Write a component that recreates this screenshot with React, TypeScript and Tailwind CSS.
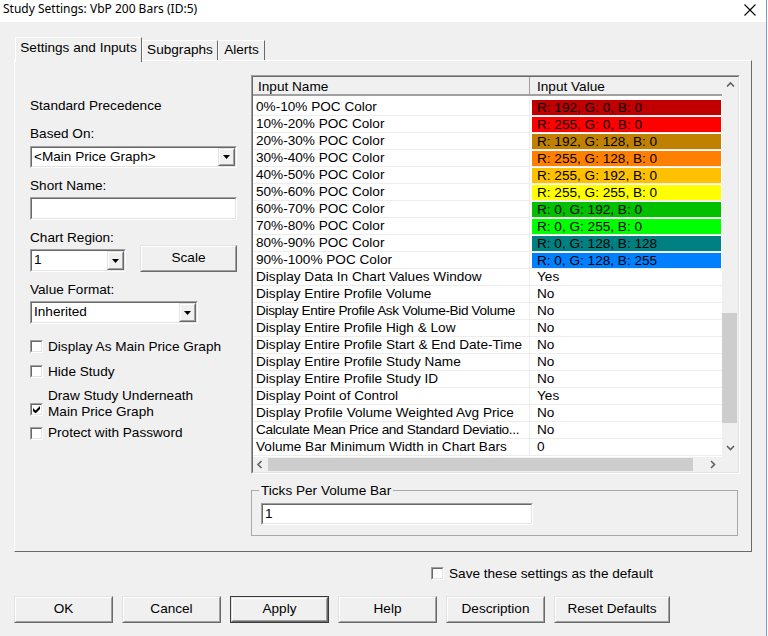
import type { ReactNode } from "react";

const FONT = { fontFamily: '"Liberation Sans", Arial, sans-serif' };

type Row = { name: string; value: string; color?: string; tight?: boolean };

const rows: Row[] = [
  { name: "0%-10% POC Color", value: "R: 192, G: 0, B: 0", color: "bg-[#c00000]" },
  { name: "10%-20% POC Color", value: "R: 255, G: 0, B: 0", color: "bg-[#ff0000]" },
  { name: "20%-30% POC Color", value: "R: 192, G: 128, B: 0", color: "bg-[#c08000]" },
  { name: "30%-40% POC Color", value: "R: 255, G: 128, B: 0", color: "bg-[#ff8000]" },
  { name: "40%-50% POC Color", value: "R: 255, G: 192, B: 0", color: "bg-[#ffc000]" },
  { name: "50%-60% POC Color", value: "R: 255, G: 255, B: 0", color: "bg-[#ffff00]" },
  { name: "60%-70% POC Color", value: "R: 0, G: 192, B: 0", color: "bg-[#00c000]" },
  { name: "70%-80% POC Color", value: "R: 0, G: 255, B: 0", color: "bg-[#00ff00]" },
  { name: "80%-90% POC Color", value: "R: 0, G: 128, B: 128", color: "bg-[#008080]" },
  { name: "90%-100% POC Color", value: "R: 0, G: 128, B: 255", color: "bg-[#0080ff]" },
  { name: "Display Data In Chart Values Window", value: "Yes" },
  { name: "Display Entire Profile Volume", value: "No" },
  { name: "Display Entire Profile Ask Volume-Bid Volume", value: "No", tight: true },
  { name: "Display Entire Profile High & Low", value: "No" },
  { name: "Display Entire Profile Start & End Date-Time", value: "No" },
  { name: "Display Entire Profile Study Name", value: "No" },
  { name: "Display Entire Profile Study ID", value: "No" },
  { name: "Display Point of Control", value: "Yes" },
  { name: "Display Profile Volume Weighted Avg Price", value: "No" },
  { name: "Calculate Mean Price and Standard Deviatio...", value: "No", tight: true },
  { name: "Volume Bar Minimum Width in Chart Bars", value: "0" },
];

// classic sunken 2px frame
function Sunken({ className = "", children }: { className?: string; children?: ReactNode }) {
  return (
    <div className={`border border-t-[#a0a0a0] border-l-[#a0a0a0] border-b-white border-r-white ${className}`}>
      <div className="flex h-full w-full border border-t-[#696969] border-l-[#696969] border-b-[#e3e3e3] border-r-[#e3e3e3] bg-white">
        {children}
      </div>
    </div>
  );
}

function Raised({ className = "", children }: { className?: string; children?: ReactNode }) {
  return (
    <div className={`border border-t-[#e3e3e3] border-l-[#e3e3e3] border-b-[#696969] border-r-[#696969] ${className}`}>
      <div className="flex h-full w-full items-center justify-center border border-t-white border-l-white border-b-[#a0a0a0] border-r-[#a0a0a0] bg-[#f0f0f0]">
        {children}
      </div>
    </div>
  );
}

function DropArrow() {
  return (
    <svg width="7" height="4" viewBox="0 0 7 4">
      <path d="M0 0h7L3.5 4z" fill="#000" />
    </svg>
  );
}

function Select({ value, className }: { value: string; className: string }) {
  return (
    <Sunken className={className}>
      <span className="flex-1 pl-[2px] leading-[17px] whitespace-nowrap">{value}</span>
      <Raised className="w-[17px]">
        <DropArrow />
      </Raised>
    </Sunken>
  );
}

function Checkbox({ checked = false }: { checked?: boolean }) {
  return (
    <div className="h-[13px] w-[13px] shrink-0 border border-t-[#a0a0a0] border-l-[#a0a0a0] border-b-white border-r-white">
      <div className="flex h-full w-full items-center justify-center border border-t-[#696969] border-l-[#696969] border-b-[#e3e3e3] border-r-[#e3e3e3] bg-white">
        {checked && (
          <svg width="7" height="7" viewBox="0 0 7 7">
            <path d="M0 2v3l2 2h1l4-4V0L2.5 4.5z" fill="#000" />
          </svg>
        )}
      </div>
    </div>
  );
}

function Chevron({ dir }: { dir: "up" | "down" | "left" | "right" }) {
  const d = {
    up: "M1 5.5 4.5 2 8 5.5",
    down: "M1 2 4.5 5.5 8 2",
    left: "M5.5 1 2 4.5 5.5 8",
    right: "M2 1 5.5 4.5 2 8",
  }[dir];
  return (
    <svg width="9" height="9" viewBox="0 0 9 9">
      <path d={d} fill="none" stroke="#606060" strokeWidth="1.6" />
    </svg>
  );
}

function Button({ label, w = "w-[99px]", primary = false }: { label: string; w?: string; primary?: boolean }) {
  if (primary) {
    return (
      <div className={`h-[27px] ${w} border border-[#3c3c3c]`}>
        <Raised className="h-full w-full">{label}</Raised>
      </div>
    );
  }
  return <Raised className={`h-[27px] ${w}`}>{label}</Raised>;
}

export default function App() {
  return (
    <div className="flex h-[636px] w-[768px] overflow-hidden bg-[#f0f0f0] text-[13.6px] text-black" style={FONT}>
      <div className="flex w-[766px] flex-col">
        {/* title bar */}
        <div className="flex h-[22px] items-start justify-between bg-white pl-[3px] pr-[10px]">
          <span className="pt-[1px] text-[12px] leading-[16px]" style={{ fontFamily: '"Noto Sans", sans-serif' }}>
            Study Settings: VbP 200 Bars (ID:5)
          </span>
          <svg className="mt-[4px]" width="12" height="12" viewBox="0 0 12 12">
            <path d="M0.5 0.5 11.5 11.5M11.5 0.5 0.5 11.5" stroke="#000" strokeWidth="1.1" />
          </svg>
        </div>

        {/* tabs */}
        <div className="flex h-[38px] items-end pl-[15px]">
          <div className="relative z-10 -mb-[2px] h-[25px] w-[127px] border-t border-l border-r border-t-white border-l-white border-r-[#696969] bg-[#f0f0f0] pt-[2px] text-center leading-[15px] whitespace-nowrap">
            Settings and Inputs
          </div>
          <div className="h-[20px] w-[76px] border-t border-l border-r border-t-white border-l-white border-r-[#696969] pt-[1px] text-center leading-[15px]">
            Subgraphs
          </div>
          <div className="h-[20px] w-[47px] border-t border-l border-r border-t-white border-l-white border-r-[#696969] pt-[1px] text-center leading-[15px]">
            Alerts
          </div>
        </div>

        {/* tab panel */}
        <div className="ml-[14px] flex h-[492px] w-[738px] border border-t-white border-l-white border-b-[#696969] border-r-[#696969]">
          {/* left column */}
          <div className="ml-[15px] w-[207px] pt-[37px]">
            <div className="h-[15px] leading-[15px]">Standard Precedence</div>
            <div className="mt-[13px] h-[15px] leading-[15px]">Based On:</div>
            <Select className="mt-[5px] h-[22px] w-[207px]" value="<Main Price Graph>" />
            <div className="mt-[10px] h-[15px] leading-[15px]">Short Name:</div>
            <Sunken className="mt-[4px] h-[23px] w-[207px]" />
            <div className="mt-[11px] h-[14px] leading-[14px]">Chart Region:</div>
            <div className="flex items-start">
              <Select className="mt-[4px] h-[23px] w-[96px]" value="1" />
              <Raised className="ml-[14px] h-[27px] w-[97px]">Scale</Raised>
            </div>
            <div className="mt-[11px] h-[14px] leading-[14px]">Value Format:</div>
            <Select className="mt-[4px] h-[23px] w-[168px]" value="Inherited" />

            <div className="mt-[15px] flex items-start gap-[5px]">
              <div className="mt-[1px]">
                <Checkbox />
              </div>
              <span className="leading-[15px]">Display As Main Price Graph</span>
            </div>
            <div className="mt-[10px] flex items-start gap-[5px]">
              <div className="mt-[1px]">
                <Checkbox />
              </div>
              <span className="leading-[15px]">Hide Study</span>
            </div>
            <div className="mt-[9px] flex items-start gap-[5px]">
              <div className="mt-[15px]">
                <Checkbox checked />
              </div>
              <span className="leading-[16px]">
                Draw Study Underneath
                <br />
                Main Price Graph
              </span>
            </div>
            <div className="mt-[5px] flex items-start gap-[5px]">
              <div className="mt-[2px]">
                <Checkbox />
              </div>
              <span className="leading-[15px]">Protect with Password</span>
            </div>
          </div>

          {/* right column */}
          <div className="ml-[14px] pt-[14px]">
            <div className="h-[399px] w-[489px] border border-t-[#a0a0a0] border-l-[#a0a0a0] border-b-white border-r-white">
              <div className="flex h-full w-full flex-col border border-t-[#696969] border-l-[#696969] border-b-[#e3e3e3] border-r-[#e3e3e3] bg-white">
                <div className="flex h-[380px]">
                  {/* grid */}
                  <div className="w-[469px] overflow-hidden">
                    <div className="flex h-[19px] border-b-2 border-[#a0a0a0] bg-[#f0f0f0] leading-[19px]">
                      <div className="w-[277px] border-r border-[#a0a0a0] pl-[5px]">Input Name</div>
                      <div className="flex-1 pl-[7px]">Input Value</div>
                    </div>
                    <div className="mt-[3px]">
                      {rows.map((r) => (
                        <div key={r.name} className="flex h-[17px] border-b border-[#ededed]">
                          <div
                            className={`w-[277px] shrink-0 border-r border-[#ededed] pl-[3px] leading-[16px] whitespace-nowrap ${
                              r.tight ? "tracking-[-0.35px]" : ""
                            }`}
                          >
                            {r.name}
                          </div>
                          <div className="flex-1">
                            {r.color ? (
                              <div className={`mt-[1px] mr-[1px] ml-[2px] h-[15px] pl-[5px] leading-[15px] ${r.color}`}>
                                {r.value}
                              </div>
                            ) : (
                              <div className="pl-[7px] leading-[16px]">{r.value}</div>
                            )}
                          </div>
                        </div>
                      ))}
                    </div>
                  </div>
                  {/* vertical scrollbar */}
                  <div className="flex w-[16px] flex-col bg-[#f0f0f0]">
                    <div className="flex h-[17px] items-center justify-center">
                      <Chevron dir="up" />
                    </div>
                    <div className="flex-1">
                      <div className="mt-[219px] h-[110px] w-[15px] bg-[#cdcdcd]" />
                    </div>
                    <div className="flex h-[17px] items-center justify-center">
                      <Chevron dir="down" />
                    </div>
                  </div>
                </div>
                {/* horizontal scrollbar */}
                <div className="flex flex-1 bg-[#f0f0f0]">
                  <div className="flex w-[15px] items-center justify-center">
                    <Chevron dir="left" />
                  </div>
                  <div className="my-[1px] w-[425px] bg-[#cdcdcd]" />
                  <div className="flex-1" />
                  <div className="flex w-[17px] items-center justify-center">
                    <Chevron dir="right" />
                  </div>
                  <div className="w-[16px]" />
                </div>
              </div>
            </div>

            {/* group box */}
            <div className="relative mt-[16px] h-[46px] w-[487px] border border-[#a9a9a9] pt-[12px] pl-[9px]">
              <span className="absolute -top-[8px] left-[7px] bg-[#f0f0f0] px-[2px] leading-[15px]">
                Ticks Per Volume Bar
              </span>
              <Sunken className="h-[22px] w-[272px]">
                <span className="pl-[2px] leading-[17px]">1</span>
              </Sunken>
            </div>
          </div>
        </div>

        {/* save default */}
        <div className="mt-[14px] flex items-center gap-[5px] pl-[431px]">
          <Checkbox />
          <span className="leading-[15px]">Save these settings as the default</span>
        </div>

        {/* buttons */}
        <div className="mt-[15px] flex gap-[9px] pl-[14px]">
          <Button label="OK" />
          <Button label="Cancel" />
          <Button label="Apply" primary />
          <Button label="Help" />
          <Button label="Description" />
          <Button label="Reset Defaults" w="w-[116px]" />
        </div>
      </div>
      <div className="w-[2px] border-l border-[#7a9cc6] bg-white" />
    </div>
  );
}
